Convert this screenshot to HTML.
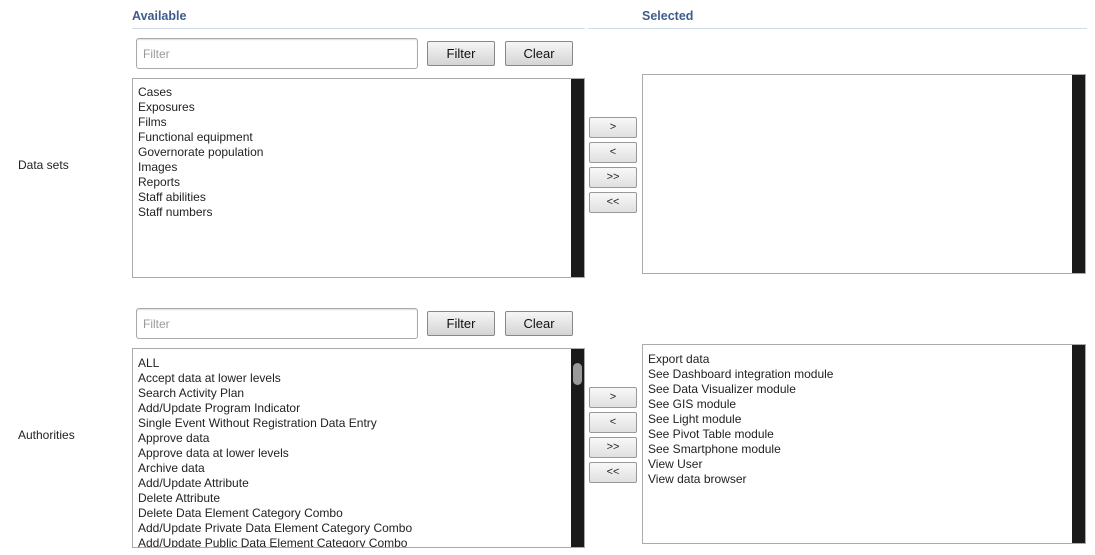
<!DOCTYPE html>
<html><head><style>
body{margin:0;width:1095px;height:555px;background:#fff;font-family:"Liberation Sans",Arial,sans-serif;font-size:12px;color:#222;position:relative;overflow:hidden}
.a{position:absolute}
.h{font-weight:bold;font-size:12.5px;color:#3e5d8c}
.line{height:1px;background:#cfdbe6}
.inp{border:1px solid #aaa;border-radius:3px;background:#fff;color:#999;box-sizing:border-box;padding:8px 6px;font-size:12px;box-shadow:inset 0 1px 1px #ddd}
.btn{box-sizing:border-box;border:1px solid #888;border-radius:2px;background:linear-gradient(#f6f6f6,#e2e2e2 60%,#d4d4d4);text-align:center;font-size:13px;color:#111}
.list{box-sizing:border-box;border:1px solid #aaa;background:#fff}
.list div{line-height:15px;padding-left:5px}
.sb{position:absolute;right:0;top:0;bottom:0;width:13px;background:#1a1a1a}
.sm{box-sizing:border-box;border:1px solid #999;border-radius:2px;background:linear-gradient(#f8f8f8,#e0e0e0);text-align:center;font-size:11px;line-height:19px;width:48px;height:21px;left:589px}
</style></head><body>
<div class="a h" style="left:132px;top:9px">Available</div>
<div class="a h" style="left:642px;top:9px">Selected</div>
<div class="a line" style="left:132px;top:28px;width:453px"></div>
<div class="a line" style="left:588px;top:28px;width:499px"></div>

<div class="a" style="left:18px;top:158px">Data sets</div>
<div class="a inp" style="left:136px;top:38px;width:282px;height:31px">Filter</div>
<div class="a btn" style="left:427px;top:41px;width:68px;height:25px;line-height:23px">Filter</div>
<div class="a btn" style="left:505px;top:41px;width:68px;height:25px;line-height:23px">Clear</div>
<div class="a list" style="left:132px;top:78px;width:453px;height:200px;padding-top:6px">
<div>Cases</div><div>Exposures</div><div>Films</div><div>Functional equipment</div><div>Governorate population</div><div>Images</div><div>Reports</div><div>Staff abilities</div><div>Staff numbers</div>
<span class="sb"></span></div>
<div class="a sm" style="top:117px">&gt;</div>
<div class="a sm" style="top:142px">&lt;</div>
<div class="a sm" style="top:167px">&gt;&gt;</div>
<div class="a sm" style="top:192px">&lt;&lt;</div>
<div class="a list" style="left:642px;top:74px;width:444px;height:200px"><span class="sb"></span></div>

<div class="a" style="left:18px;top:428px">Authorities</div>
<div class="a inp" style="left:136px;top:308px;width:282px;height:31px">Filter</div>
<div class="a btn" style="left:427px;top:311px;width:68px;height:25px;line-height:23px">Filter</div>
<div class="a btn" style="left:505px;top:311px;width:68px;height:25px;line-height:23px">Clear</div>
<div class="a list" style="left:132px;top:348px;width:453px;height:200px;padding-top:7px;overflow:hidden">
<div>ALL</div><div>Accept data at lower levels</div><div>Search Activity Plan</div><div>Add/Update Program Indicator</div><div>Single Event Without Registration Data Entry</div><div>Approve data</div><div>Approve data at lower levels</div><div>Archive data</div><div>Add/Update Attribute</div><div>Delete Attribute</div><div>Delete Data Element Category Combo</div><div>Add/Update Private Data Element Category Combo</div><div>Add/Update Public Data Element Category Combo</div>
<span class="sb"><span style="position:absolute;left:2px;top:14px;width:9px;height:22px;border-radius:5px;background:#9a9a9a"></span></span></div>
<div class="a sm" style="top:387px">&gt;</div>
<div class="a sm" style="top:412px">&lt;</div>
<div class="a sm" style="top:437px">&gt;&gt;</div>
<div class="a sm" style="top:462px">&lt;&lt;</div>
<div class="a list" style="left:642px;top:344px;width:444px;height:200px;padding-top:7px">
<div>Export data</div><div>See Dashboard integration module</div><div>See Data Visualizer module</div><div>See GIS module</div><div>See Light module</div><div>See Pivot Table module</div><div>See Smartphone module</div><div>View User</div><div>View data browser</div>
<span class="sb"></span></div>
</body></html>
